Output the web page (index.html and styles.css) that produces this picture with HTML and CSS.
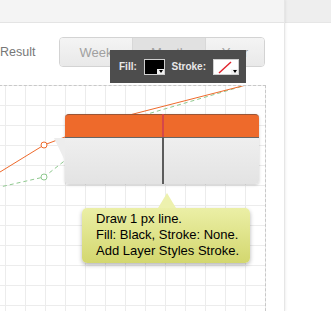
FILE: index.html
```html
<!DOCTYPE html>
<html lang="en">
<head>
    <meta charset="UTF-8">
    <meta name="viewport" content="width=device-width, initial-scale=1.0">
    <title>Result chart</title>
    <link rel="stylesheet" href="styles.css">
</head>
<body>
    <div class="page">
        <div class="main">
            <div class="topbar"></div>
            <div class="head">
                <span class="title">Result</span>
                <div class="tabs">
                    <span class="tab tab-week">Week</span>
                    <span class="tab tab-month active">Month</span>
                    <span class="tab tab-year">Year</span>
                </div>
            </div>
            <div class="chart">
                <svg class="lines" width="280" height="225" viewBox="-15 86 280 225">
                    <polyline points="-15,197 0,187 44,177 110,125 250,84" fill="none" stroke="#8fc98f" stroke-width="1" stroke-dasharray="4 3"/>
                    <polyline points="-15,181 0,172 44,145 110,120 250,84" fill="none" stroke="#ee6a2c" stroke-width="1"/>
                    <circle cx="44" cy="177" r="3" fill="#fff" stroke="#8fc98f"/>
                    <circle cx="44" cy="145" r="3" fill="#fff" stroke="#ee6a2c"/>
                </svg>
            </div>

            <!-- floating toolbar -->
            <div class="toolbar">
                <span class="tool-label">Fill:</span>
                <span class="swatch swatch-fill"></span>
                <span class="tool-label">Stroke:</span>
                <span class="swatch swatch-stroke">
                    <svg width="24" height="14" viewBox="0 0 24 14"><line x1="5" y1="13" x2="17" y2="2" stroke="#e0202a" stroke-width="1.4"/></svg>
                </span>
            </div>

            <!-- tooltip widget -->
            <div class="widget">
                <div class="widget-head"></div>
                <div class="widget-body"></div>
                <div class="widget-divider"></div>
            </div>

            <div class="note">
                Draw 1 px line.<br>
                Fill: Black, Stroke: None.<br>
                Add Layer Styles Stroke.
            </div>
        </div>
        <div class="side">
            <div class="side-top"></div>
        </div>
    </div>
</body>
</html>
```

FILE: styles.css
```css
body {
    margin: 0;
    font-family: "Liberation Sans", Arial, sans-serif;
    background-color: #fff;
    overflow: hidden;
}
.page {
    display: flex;
    width: 331px;
    height: 311px;
    overflow: hidden;
}
.main {
    position: relative;
    width: 284px;
    border-right: 1px solid #e6e6e6;
    box-shadow: 1px 0 2px rgba(0, 0, 0, 0.06);
    overflow: hidden;
}
.side {
    flex: 1;
}
.side-top {
    height: 22px;
    background-color: #eeeeee;
    border-bottom: 1px solid #e6e6e6;
}
.topbar {
    height: 22px;
    background-color: #f4f4f4;
    border-bottom: 1px solid #e4e4e4;
}
.head {
    display: flex;
    align-items: center;
    justify-content: space-between;
    width: 265px;
    margin-top: 14px;
}
.title {
    font-size: 12.5px;
    color: #777;
}
.tabs {
    display: flex;
    height: 28px;
    border: 1px solid #d3d3d3;
    border-radius: 4px;
    overflow: hidden;
}
.tab {
    display: flex;
    align-items: center;
    justify-content: center;
    font-size: 13px;
    color: #a0a0a0;
    background: linear-gradient(#f4f4f4, #e9e9e9);
}
.tab-week {
    width: 72px;
    border-right: 1px solid #d8d8d8;
}
.tab-month {
    width: 72px;
    border-right: 1px solid #d8d8d8;
}
.tab-year {
    width: 58px;
}
.tab.active {
    background: #e1e1e1;
}
.chart {
    position: relative;
    margin-top: 18px;
    margin-left: -16px;
    width: 280px;
    height: 240px;
    border-top: 1px dashed #c8c8c8;
    border-left: 1px dashed #c8c8c8;
    border-right: 1px dashed #c8c8c8;
    background-image:
        linear-gradient(to right, #ececec 1px, transparent 1px),
        linear-gradient(to bottom, transparent 19px, #ececec 19px);
    background-size: 20px 20px;
}
.lines {
    position: absolute;
    left: 0;
    top: 0;
}
.toolbar {
    position: absolute;
    left: 110px;
    top: 50px;
    width: 136px;
    height: 33px;
    background-color: #4d4d4d;
    display: flex;
    align-items: center;
    padding-left: 9px;
    box-sizing: border-box;
}
.tool-label {
    font-size: 10px;
    font-weight: bold;
    color: #e8e8e8;
    margin-right: 7px;
}
.swatch {
    position: relative;
    width: 24px;
    height: 14px;
    border: 1px solid #d0d0d0;
    margin-right: 7px;
}
.swatch-fill {
    background-color: #000;
}
.swatch-stroke {
    background-color: #fff;
}
.swatch-stroke svg {
    display: block;
}
/* dropdown corner */
.swatch::after {
    content: "";
    position: absolute;
    right: 0;
    bottom: 0;
    width: 7px;
    height: 5px;
    background-color: #f2f2f2;
}
.swatch::before {
    content: "";
    position: absolute;
    right: 1px;
    bottom: 1px;
    border-left: 2.5px solid transparent;
    border-right: 2.5px solid transparent;
    border-top: 3px solid #000;
    z-index: 1;
}
.widget {
    position: absolute;
    left: 65px;
    top: 114px;
    width: 194px;
    height: 70px;
    border-radius: 4px;
    box-shadow: 0 1px 3px rgba(0, 0, 0, 0.22);
}
.widget::before {
    content: "";
    position: absolute;
    left: -11px;
    top: 24px;
    width: 11px;
    height: 23px;
    background-color: #ededed;
    clip-path: polygon(0 0, 100% 0, 100% 100%);
}
.widget-head {
    height: 22px;
    background-color: #ee6a2b;
    border-top: 1px solid #9a5536;
    border-bottom: 1px solid #666;
    border-radius: 4px 4px 0 0;
}
.widget-body {
    height: 46px;
    background: linear-gradient(#efefef, #e3e3e3);
    border-radius: 0 0 4px 4px;
}
.widget-divider {
    position: absolute;
    left: 97px;
    top: 0;
    width: 2px;
    height: 70px;
    background: linear-gradient(#d5474a 0, #d5474a 23px, #5c5c5c 23px);
}
.note {
    position: absolute;
    left: 82px;
    top: 208px;
    width: 168px;
    height: 55px;
    box-sizing: border-box;
    padding: 3px 0 0 14px;
    font-size: 13px;
    line-height: 16px;
    color: #000;
    background: linear-gradient(#ebefa6, #d3d76e);
    border-radius: 5px;
    box-shadow: 0 2px 4px rgba(0, 0, 0, 0.3);
}
.note::before {
    content: "";
    position: absolute;
    left: 76px;
    top: -15px;
    width: 18px;
    height: 15px;
    background-color: #edf1ae;
    clip-path: polygon(50% 0, 100% 100%, 0 100%);
}
```
